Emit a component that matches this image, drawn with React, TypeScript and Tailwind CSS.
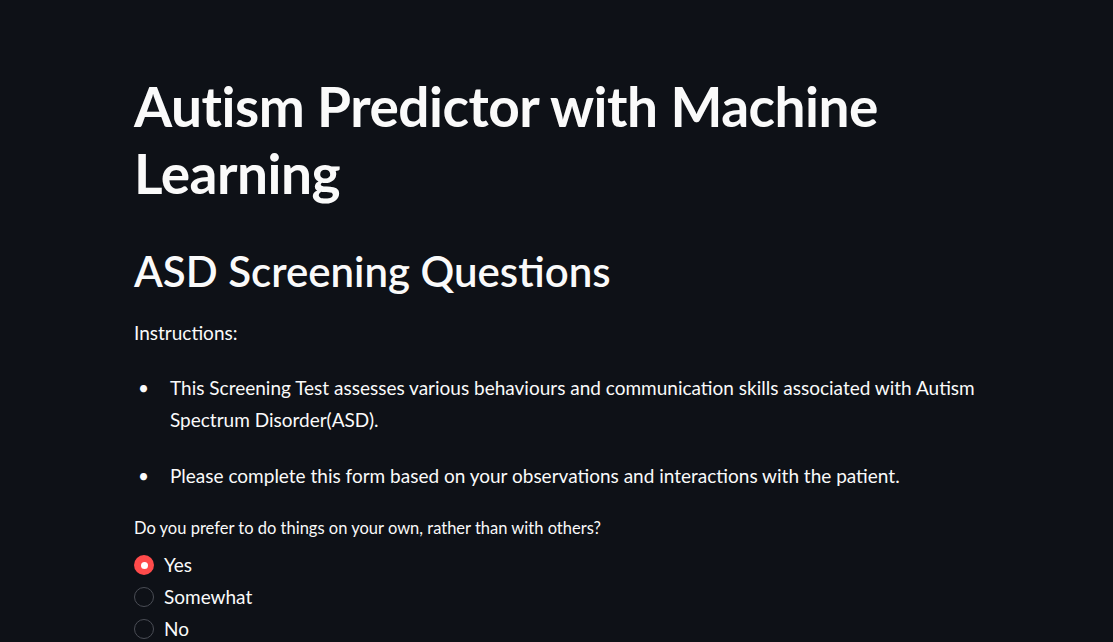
import { useState } from 'react'

const options = ['Yes', 'Somewhat', 'No']

const App = () => {
  const [answer, setAnswer] = useState('Yes')

  return (
    <div className="min-h-screen bg-[#0e1117] text-[#fafafa] font-['Lato','Liberation_Sans',sans-serif] overflow-hidden">
      <div className="pl-[134px] pr-[100px] pt-[73px]">
        <h1 className="text-[55px] font-bold leading-[67px] tracking-[-0.5px]">
          Autism Predictor with Machine
          <br />
          Learning
        </h1>

        <h2 className="mt-[37px] text-[42px] font-semibold leading-[54px]">ASD Screening Questions</h2>

        <p className="mt-[22px] text-[19px] leading-[26px]">Instructions:</p>

        <ul className="mt-[26px] flex flex-col gap-[24px] text-[19px] leading-[32px]">
          <li className="flex">
            <span className="w-[36px] shrink-0 pl-[4px]">•</span>
            <span className="max-w-[840px]">
              This Screening Test assesses various behaviours and communication skills associated with Autism Spectrum Disorder(ASD).
            </span>
          </li>
          <li className="flex">
            <span className="w-[36px] shrink-0 pl-[4px]">•</span>
            <span>Please complete this form based on your observations and interactions with the patient.</span>
          </li>
        </ul>

        <p className="mt-[24px] text-[16.5px] leading-[24px]">Do you prefer to do things on your own, rather than with others?</p>

        <div className="mt-[9px] flex flex-col">
          {options.map(option => {
            const selected = answer === option
            return (
              <label
                key={option}
                onClick={() => setAnswer(option)}
                className="flex h-[32px] items-center gap-[10px] cursor-pointer text-[19px]"
              >
                {selected ? (
                  <span className="flex h-[20px] w-[20px] items-center justify-center rounded-full bg-[#ff4b4b]">
                    <span className="h-[7px] w-[7px] rounded-full bg-white" />
                  </span>
                ) : (
                  <span className="h-[20px] w-[20px] rounded-full border border-[#4a4d55]" />
                )}
                {option}
              </label>
            )
          })}
        </div>
      </div>
    </div>
  )
}

export default App
